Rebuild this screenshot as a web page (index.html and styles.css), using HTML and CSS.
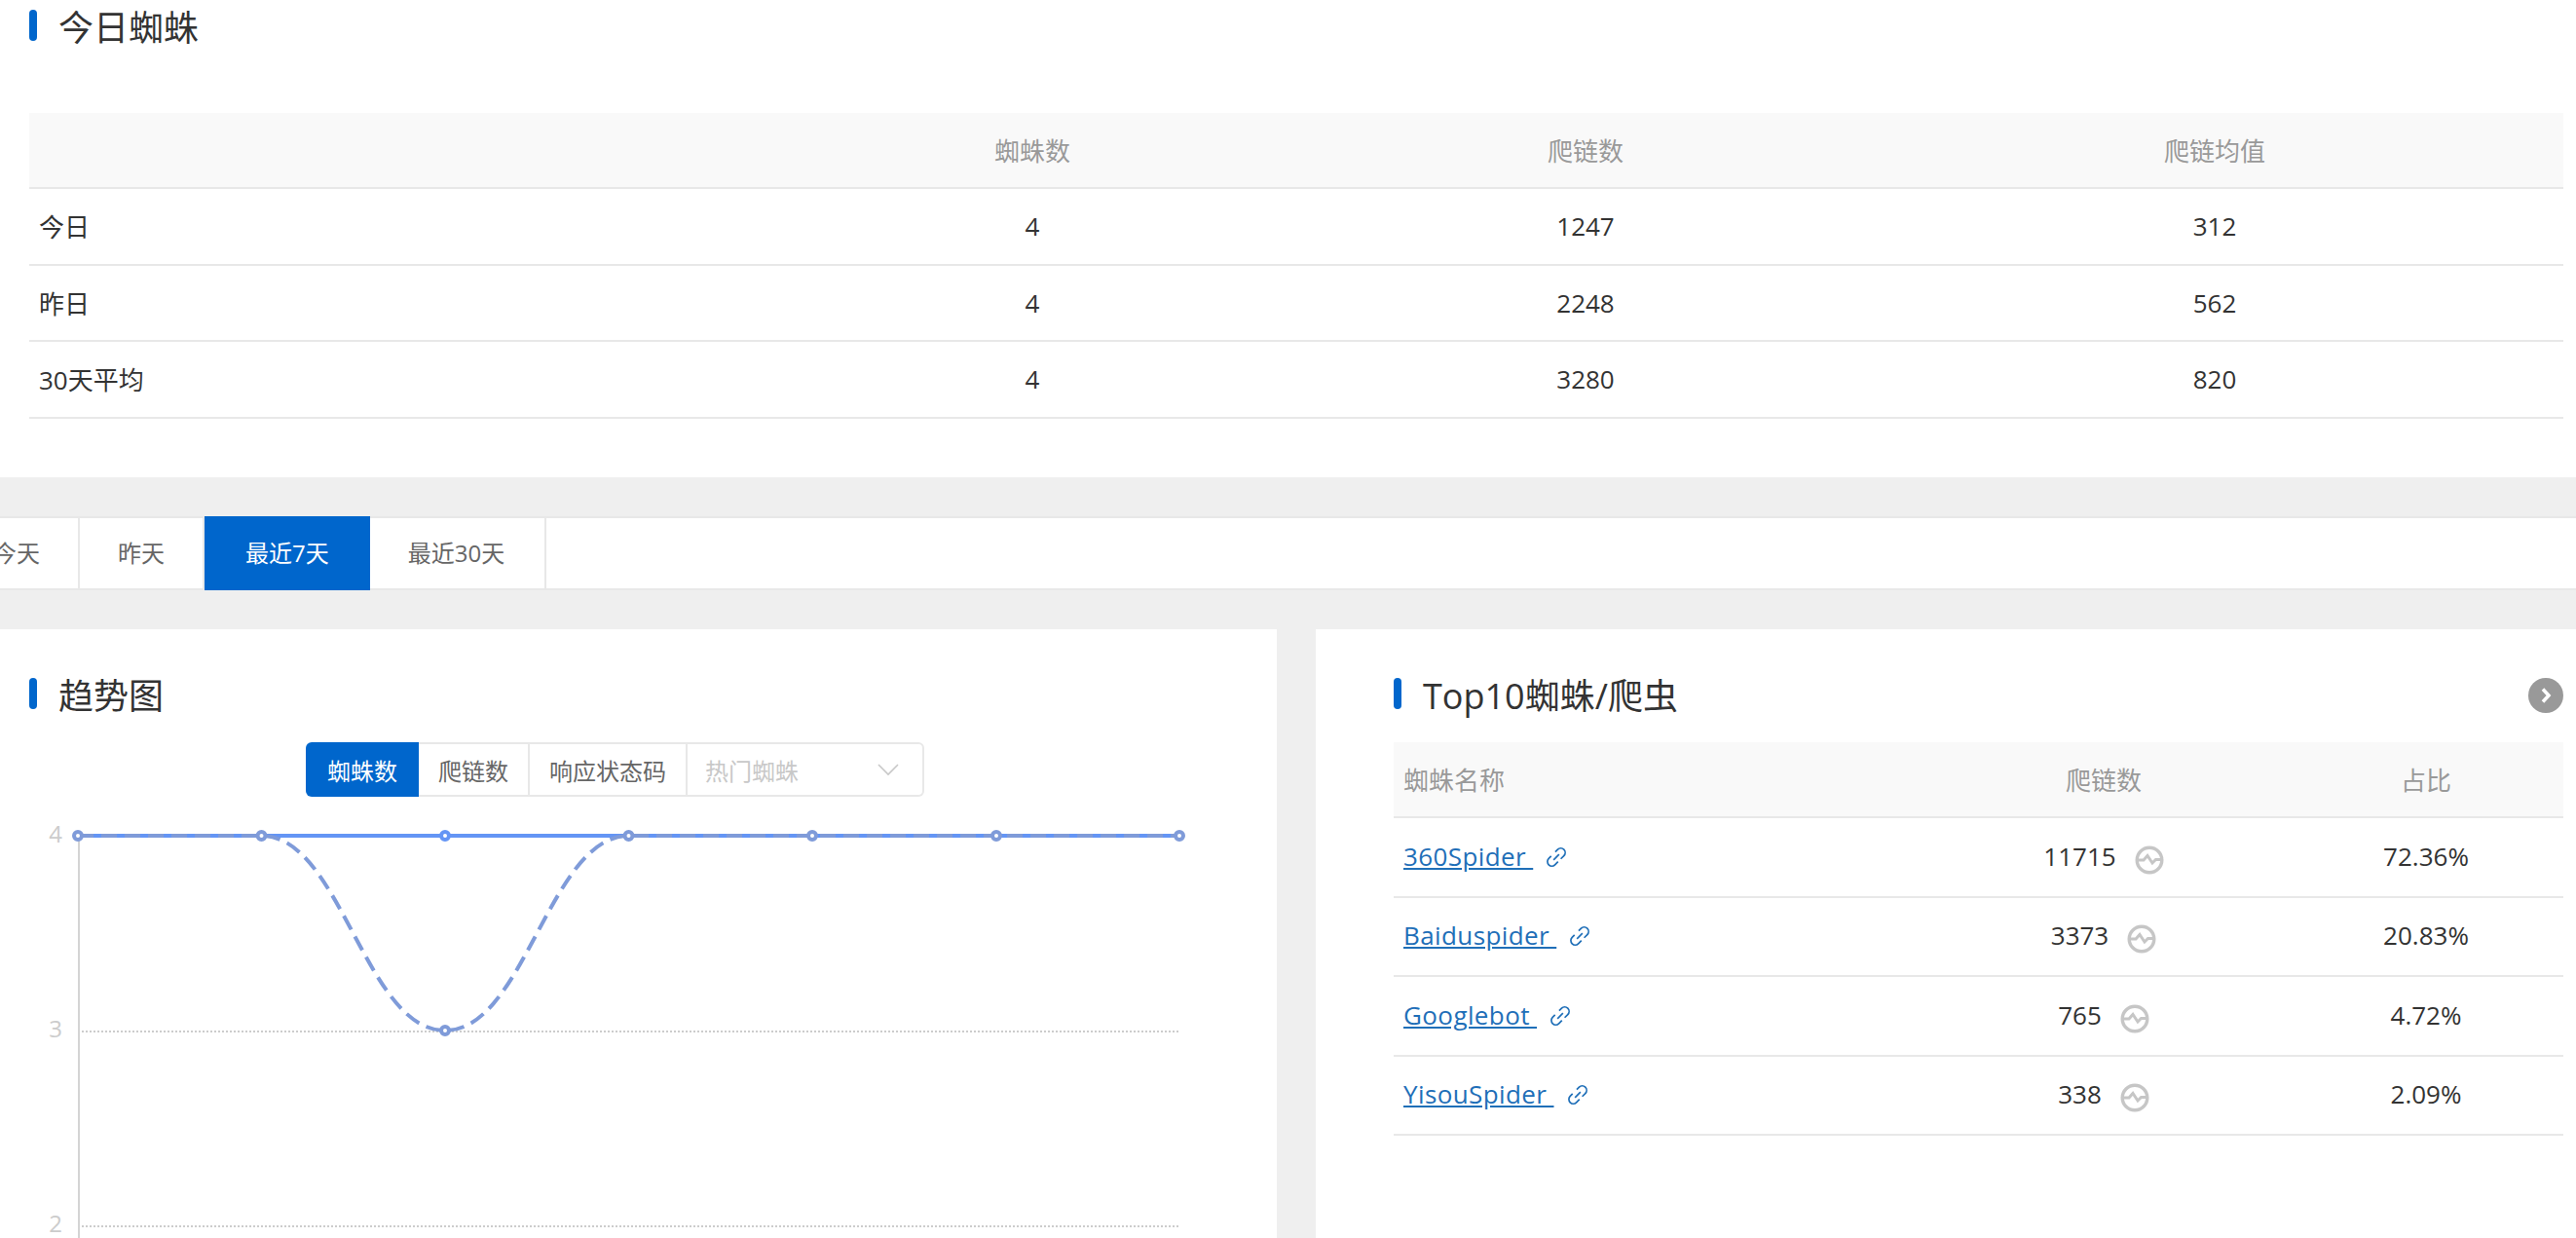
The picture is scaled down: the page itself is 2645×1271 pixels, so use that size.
FILE: index.html
```html
<!DOCTYPE html>
<html lang="zh-CN">
<head>
    <meta charset="UTF-8">
    <meta name="viewport" content="width=device-width, initial-scale=1.0">
    <title>蜘蛛统计</title>
    <link rel="stylesheet" href="styles.css">
</head>
<body>
    <!-- Shared icons -->
    <svg class="icon-defs" width="0" height="0">
        <symbol id="icon-link" viewBox="0 0 22 22">
            <g fill="none" stroke="#1f6fb8" stroke-width="1.700" transform="rotate(-45 11 11)">
                <path d="M8 6.500 H4.500 A4.500 4.500 0 0 0 4.500 15.500 H9"/>
                <path d="M14 6.500 H17.500 A4.500 4.500 0 0 1 17.500 15.500 H13"/>
                <path d="M7 11 H15"/>
            </g>
        </symbol>
        <symbol id="icon-trend" viewBox="0 0 30 30">
            <circle cx="15" cy="15" r="12.800" fill="none" stroke="#c6c6c6" stroke-width="3.400"/>
            <path d="M3 15 H9 L13 10.500 L18 18 L21.500 14.500 H27" fill="none" stroke="#c6c6c6" stroke-width="3"/>
        </symbol>
    </svg>

    <!-- Today -->
    <section class="today-panel">
        <div class="section-head"><span class="head-bar"></span><h2>今日蜘蛛</h2></div>
        <table class="data-table today-table">
            <thead>
                <tr><th class="col-label"></th><th class="col-a">蜘蛛数</th><th class="col-b">爬链数</th><th class="col-c">爬链均值</th></tr>
            </thead>
            <tbody>
                <tr><td>今日</td><td>4</td><td>1247</td><td>312</td></tr>
                <tr><td>昨日</td><td>4</td><td>2248</td><td>562</td></tr>
                <tr><td>30天平均</td><td>4</td><td>3280</td><td>820</td></tr>
            </tbody>
        </table>
    </section>

    <!-- Date tabs -->
    <nav class="date-tabs">
        <a class="tab">今天</a>
        <a class="tab">昨天</a>
        <a class="tab active">最近7天</a>
        <a class="tab">最近30天</a>
    </nav>

    <div class="panels">
        <!-- Trend chart -->
        <section class="trend-panel">
            <div class="section-head"><span class="head-bar"></span><h2>趋势图</h2></div>
            <div class="chart-toolbar">
                <button class="tool-btn active">蜘蛛数</button>
                <button class="tool-btn">爬链数</button>
                <button class="tool-btn">响应状态码</button>
                <div class="tool-select">
                    <span>热门蜘蛛</span>
                    <svg width="22" height="14" viewBox="0 0 22 14"><path d="M1 2 L11 12 L21 2" fill="none" stroke="#c8c8c8" stroke-width="1.600"/></svg>
                </div>
            </div>
            <svg class="trend-chart" width="1311" height="453" viewBox="0 0 1311 453">
                <line class="grid-line" x1="80" y1="241" x2="1211" y2="241"/>
                <line class="grid-line" x1="80" y1="441" x2="1211" y2="441"/>
                <line class="axis-line" x1="81" y1="40" x2="81" y2="453"/>
                <text class="axis-label" x="64" y="47">4</text>
                <text class="axis-label" x="64" y="247">3</text>
                <text class="axis-label" x="64" y="447">2</text>
                <line class="series-solid" x1="80" y1="40" x2="1211" y2="40"/>
                <path class="series-dash" d="M80 40 H268.5 C350 40 375 240 457 240 C539 240 564 40 645.500 40 H1211"/>
                <g class="dots-dash">
                    <circle cx="80" cy="40" r="4"/>
                    <circle cx="268.500" cy="40" r="4"/>
                    <circle cx="457" cy="240" r="4"/>
                    <circle cx="645.500" cy="40" r="4"/>
                    <circle cx="834" cy="40" r="4"/>
                    <circle cx="1023" cy="40" r="4"/>
                    <circle cx="1211" cy="40" r="4"/>
                </g>
                <circle class="dot-solid" cx="457" cy="40" r="4"/>
            </svg>
        </section>

        <!-- Top 10 -->
        <section class="top-panel">
            <div class="section-head">
                <span class="head-bar"></span><h2>Top10蜘蛛/爬虫</h2>
                <a class="more-btn">
                    <svg width="36" height="36" viewBox="0 0 36 36"><circle cx="18" cy="18" r="18" fill="#999"/><path d="M15 11.500 L21 18 L15 24.500" fill="none" stroke="#fff" stroke-width="3.500"/></svg>
                </a>
            </div>
            <table class="data-table top-table">
                <thead>
                    <tr><th class="col-name">蜘蛛名称</th><th class="col-count">爬链数</th><th class="col-share">占比</th></tr>
                </thead>
                <tbody>
                    <tr>
                        <td><a class="spider-link">360Spider&nbsp;</a><svg class="link-icon"><use href="#icon-link"/></svg></td>
                        <td><span class="count-cell">11715<svg class="trend-icon"><use href="#icon-trend"/></svg></span></td>
                        <td>72.36%</td>
                    </tr>
                    <tr>
                        <td><a class="spider-link">Baiduspider&nbsp;</a><svg class="link-icon"><use href="#icon-link"/></svg></td>
                        <td><span class="count-cell">3373<svg class="trend-icon"><use href="#icon-trend"/></svg></span></td>
                        <td>20.83%</td>
                    </tr>
                    <tr>
                        <td><a class="spider-link">Googlebot&nbsp;</a><svg class="link-icon"><use href="#icon-link"/></svg></td>
                        <td><span class="count-cell">765<svg class="trend-icon"><use href="#icon-trend"/></svg></span></td>
                        <td>4.72%</td>
                    </tr>
                    <tr>
                        <td><a class="spider-link">YisouSpider&nbsp;</a><svg class="link-icon"><use href="#icon-link"/></svg></td>
                        <td><span class="count-cell">338<svg class="trend-icon"><use href="#icon-trend"/></svg></span></td>
                        <td>2.09%</td>
                    </tr>
                </tbody>
            </table>
        </section>
    </div>
</body>
</html>
```

FILE: styles.css
```css
/* General */
body {
    margin: 0;
    height: 1271px;
    overflow: hidden;
    background: #efefef;
    font-family: "Open Sans", "Noto Sans CJK SC", sans-serif;
    color: #333;
}

.icon-defs {
    display: none;
}

/* Section headings */
.section-head {
    display: flex;
    align-items: center;
    gap: 22px;
    height: 32px;
}

.section-head h2 {
    margin: 5px 0 0;
    font-size: 36px;
    font-weight: 400;
    line-height: 32px;
    color: #333;
}

.head-bar {
    width: 8px;
    height: 32px;
    border-radius: 4px;
    background: #0066cc;
}

.more-btn {
    display: block;
    height: 36px;
    margin-left: auto;
    margin-top: 4px;
}

/* Tables */
.data-table {
    width: 100%;
    border-collapse: collapse;
    table-layout: fixed;
    font-size: 26px;
}

.data-table th {
    height: 76px;
    padding: 0;
    font-weight: 400;
    color: #999;
    background: #f9f9f9;
    border-bottom: 2px solid #e8e8e8;
}

.data-table td {
    padding: 0;
    text-align: center;
    border-bottom: 2px solid #e8e8e8;
}

/* Today panel */
.today-panel {
    height: 490px;
    box-sizing: border-box;
    padding: 10px 13px 0 30px;
    background: #fff;
}

.today-table {
    margin-top: 74px;
}

.today-table td {
    height: 76.500px;
}

.today-table td:first-child {
    padding-left: 10px;
    text-align: left;
}

.col-label { width: 750px; }
.col-a { width: 560px; }
.col-b { width: 576px; }

/* Date tabs */
.date-tabs {
    display: flex;
    height: 72px;
    margin-top: 40px;
    background: #fff;
    border-top: 2px solid #e8e8e8;
    border-bottom: 2px solid #e8e8e8;
}

.tab {
    box-sizing: border-box;
    padding: 0 39px;
    font-size: 24px;
    line-height: 72px;
    color: #666;
    border-right: 2px solid #e8e8e8;
}

.tab:first-child {
    margin-left: -46px;
}

.tab:last-child {
    padding-right: 41px;
}

.tab.active {
    height: 76px;
    margin-top: -2px;
    padding: 0 42px;
    line-height: 76px;
    color: #fff;
    background: #0066cc;
    border-right: none;
}

/* Lower panels */
.panels {
    display: flex;
    gap: 40px;
    height: 625px;
    margin-top: 40px;
}

.trend-panel {
    width: 1311px;
    flex-shrink: 0;
    box-sizing: border-box;
    padding-top: 50px;
    background: #fff;
}

.trend-panel .section-head {
    padding-left: 30px;
}

.top-panel {
    flex: 1;
    box-sizing: border-box;
    padding: 50px 13px 0 80px;
    background: #fff;
}

/* Chart toolbar */
.chart-toolbar {
    display: flex;
    height: 56px;
    margin: 34px 0 0 314px;
    width: 635px;
    font-size: 24px;
}

.tool-btn {
    box-sizing: border-box;
    height: 56px;
    padding: 0 20px;
    font-family: inherit;
    font-size: 24px;
    color: #666;
    background: #fff;
    border: 2px solid #e8e8e8;
    border-left: none;
}

.tool-btn.active {
    width: 116px;
    padding: 0;
    color: #fff;
    background: #0066cc;
    border: none;
    border-radius: 6px 0 0 6px;
}

.tool-select {
    flex: 1;
    display: flex;
    align-items: center;
    justify-content: space-between;
    box-sizing: border-box;
    padding: 0 24px 0 18px;
    color: #c8c8c8;
    border: 2px solid #e8e8e8;
    border-left: none;
    border-radius: 0 6px 6px 0;
    background: #fff;
}

/* Chart */
.trend-chart {
    display: block;
}

.grid-line {
    stroke: #ccc;
    stroke-width: 2;
    stroke-dasharray: 2 2;
}

.axis-line {
    stroke: #d4d4d4;
    stroke-width: 2;
}

.axis-label {
    font-size: 24px;
    fill: #ccc;
    text-anchor: end;
}

.series-solid {
    stroke: #6495f5;
    stroke-width: 4;
}

.series-dash {
    fill: none;
    stroke: #7f9bd9;
    stroke-width: 4;
    stroke-dasharray: 16 8;
}

.dots-dash circle {
    fill: #fff;
    stroke: #7f9bd9;
    stroke-width: 4;
}

.dot-solid {
    fill: #fff;
    stroke: #6495f5;
    stroke-width: 4;
}

/* Top 10 table */
.top-table {
    margin-top: 34px;
}

.top-table td {
    height: 77.500px;
    padding-bottom: 2px;
}

.top-table td:first-child,
.top-table th:first-child {
    padding-left: 10px;
    text-align: left;
}

.col-name { width: 529px; }
.col-count { width: 380px; }

.spider-link {
    color: #1f6fb8;
    text-decoration: underline;
    letter-spacing: 0.4px;
}

.link-icon {
    width: 22px;
    height: 22px;
    margin-left: 13px;
    vertical-align: -2px;
}

.count-cell {
    display: inline-flex;
    align-items: center;
    gap: 19px;
}

.trend-icon {
    width: 30px;
    height: 30px;
    margin-top: 8px;
}
```
